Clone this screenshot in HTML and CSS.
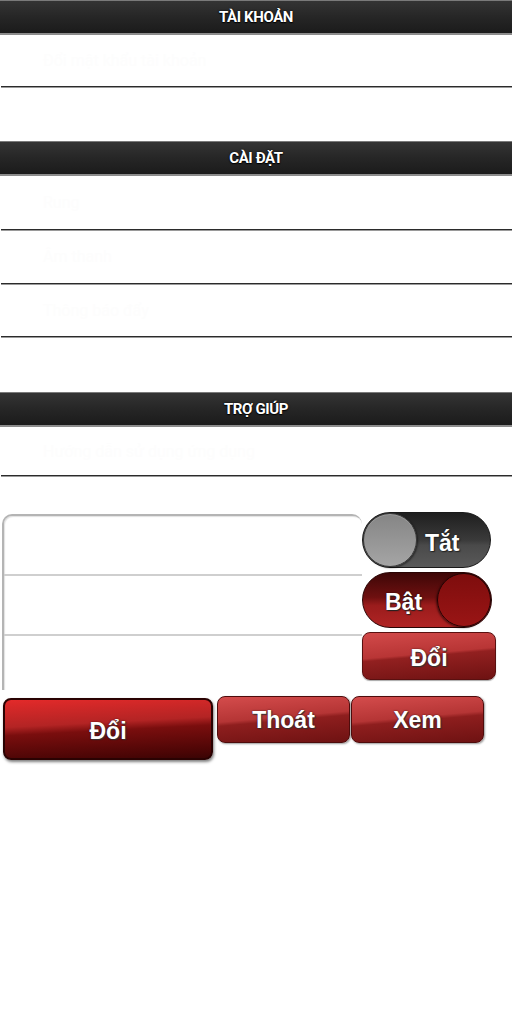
FILE: index.html
```html
<!DOCTYPE html>
<html lang="vi">
<head>
<meta charset="utf-8">
<link rel="stylesheet" href="styles.css">
</head>
<body>
<div class="page">
  <section class="group g1">
    <div class="hdr">TÀI KHOẢN</div>
    <div class="row r52"><span class="ghost">Đổi mật khẩu tài khoản</span></div>
  </section>
  <section class="group g2">
    <div class="hdr">CÀI ĐẶT</div>
    <div class="row r54"><span class="ghost">Rung</span></div>
    <div class="row r54"><span class="ghost">Âm thanh</span></div>
    <div class="row r53"><span class="ghost">Thông báo đẩy</span></div>
  </section>
  <section class="group g3">
    <div class="hdr">TRỢ GIÚP</div>
    <div class="row r49"><span class="ghost">Hướng dẫn sử dụng ứng dụng</span></div>
  </section>

  <div class="controls">
    <div class="card">
      <div class="crow c1"></div>
      <div class="crow c2"></div>
      <div class="crow c3"></div>
    </div>
    <div class="side">
      <div class="toggle off"><span class="knob"></span><span class="tlabel">Tắt</span></div>
      <div class="toggle on"><span class="tlabel">Bật</span><span class="knob"></span></div>
      <div class="btn small">Đổi</div>
    </div>
  </div>
  <div class="actions">
    <div class="btn big">Đổi</div>
    <div class="btn mid">Thoát</div>
    <div class="btn mid">Xem</div>
  </div>
</div>
</body>
</html>
```

FILE: styles.css
```css
* { box-sizing: border-box; }
html, body { margin: 0; padding: 0; background: #fff; }
body { width: 512px; height: 1024px; font-family: Roboto, "Liberation Sans", "DejaVu Sans", sans-serif; }
.page { width: 512px; display: flow-root; }
.group { display: flow-root; }

.g1 { margin-bottom: 54px; }
.g2 { margin-bottom: 55px; }
.g3 { margin-bottom: 36px; }

.hdr {
  height: 35px;
  background: linear-gradient(#343434, #262626 50%, #1b1b1b);
  border-top: 1px solid #7a7a7a;
  border-bottom: 2px solid #8c8c8c;
  color: #fff;
  font-weight: 700;
  font-size: 15px;
  letter-spacing: -0.4px;
  text-align: center;
  line-height: 33px;
  text-shadow: 0 1px 1px #000, 0 0 2px #000;
}

.row {
  display: flex;
  align-items: center;
  padding-left: 42px;
  border-bottom: 1px solid #2b2b2b;
  box-shadow: 0 1px 0 #9a9a9a;
  margin-left: 1px;
}
.r52 { height: 52px; }
.r53 { height: 53px; }
.r54 { height: 54px; }
.r49 { height: 49px; }
.ghost { color: #fdfdfd; font-size: 16px; }

.controls {
  display: flex;
  align-items: flex-start;
  padding-left: 2px;
}
.card {
  width: 360px;
  margin-top: 2px;
  border: 2px solid #b4b4b4;
  border-right: 0;
  border-bottom: 0;
  border-radius: 10px 10px 0 0;
  box-shadow: inset 1px 1px 1px #e2e2e2;
}
.crow { border-bottom: 2px solid #cfcfcf; }
.c1 { height: 60px; }
.c2 { height: 60px; }
.c3 { height: 54px; border-bottom: 0; }

.side {
  display: flex;
  flex-direction: column;
  gap: 4px;
  width: 135px;
}

.toggle {
  height: 56px;
  border-radius: 28px;
  display: flex;
  align-items: center;
}
.toggle.off {
  width: 129px;
  background: linear-gradient(#1f1f1f, #3a3a3a 50%, #4a4a4a 60%, #595959);
  border: 1px solid #1a1a1a;
}
.toggle.on {
  width: 130px;
  background: linear-gradient(#3e0707, #6e1010 45%, #9a1c1c 60%, #b02424);
  border: 1px solid #2a0404;
}
.knob {
  width: 54px;
  height: 54px;
  border-radius: 50%;
  flex: none;
}
.off .knob {
  background: linear-gradient(#858585, #a5a5a5);
  border: 1px solid #3a3a3a;
  box-shadow: 1px 1px 2px rgba(0,0,0,.5), inset 0 1px 0 #9a9a9a;
}
.on .knob {
  margin-left: auto;
  background: linear-gradient(#7e0d0d, #9a1515);
  border: 1px solid #220202;
  box-shadow: -1px 1px 2px rgba(0,0,0,.5);
}
.tlabel {
  color: #fff;
  font-family: "Liberation Sans", Arial, sans-serif;
  font-weight: 700;
  font-size: 23px;
  text-shadow: 1px 1px 1px #222, 0 0 2px rgba(0,0,0,.6);
}
.off .tlabel { margin-left: 8px; margin-top: 6px; }
.on .tlabel { margin-left: 22px; margin-top: 4px; }

.btn {
  display: flex;
  align-items: center;
  justify-content: center;
  color: #fff;
  font-family: "Liberation Sans", Arial, sans-serif;
  font-weight: 700;
  font-size: 23px;
  text-shadow: 1px 1px 1px #333, 0 0 2px rgba(0,0,0,.6);
  border-radius: 8px;
}
.btn.small {
  width: 134px;
  height: 48px;
  background: linear-gradient(175deg, #d24a4a, #b83535 45%, #922020 50%, #6e1212);
  border: 1px solid #5a1010;
  box-shadow: 0 1px 1px rgba(0,0,0,.35);
  padding-top: 4px;
}

.actions {
  display: flex;
  align-items: flex-start;
  padding-left: 3px;
  margin-top: 6px;
  gap: 4px;
}
.btn.big {
  width: 210px;
  height: 62px;
  margin-top: 2px;
  background: linear-gradient(177deg, #e32a2a, #b32424 40%, #7a0e0e 52%, #4a0505 90%, #3a0404);
  border: 2px solid #2a0202;
  box-shadow: 1px 2px 3px rgba(0,0,0,.5);
  padding-top: 4px;
}
.btn.mid {
  width: 133px;
  height: 47px;
  background: linear-gradient(175deg, #d44c4c, #b53535 45%, #8e1e1e 52%, #6e1212);
  border: 1px solid #4e0c0c;
  box-shadow: 1px 1px 2px rgba(0,0,0,.4);
  padding-top: 2px;
}
.btn.mid + .btn.mid { margin-left: -3px; }
```
